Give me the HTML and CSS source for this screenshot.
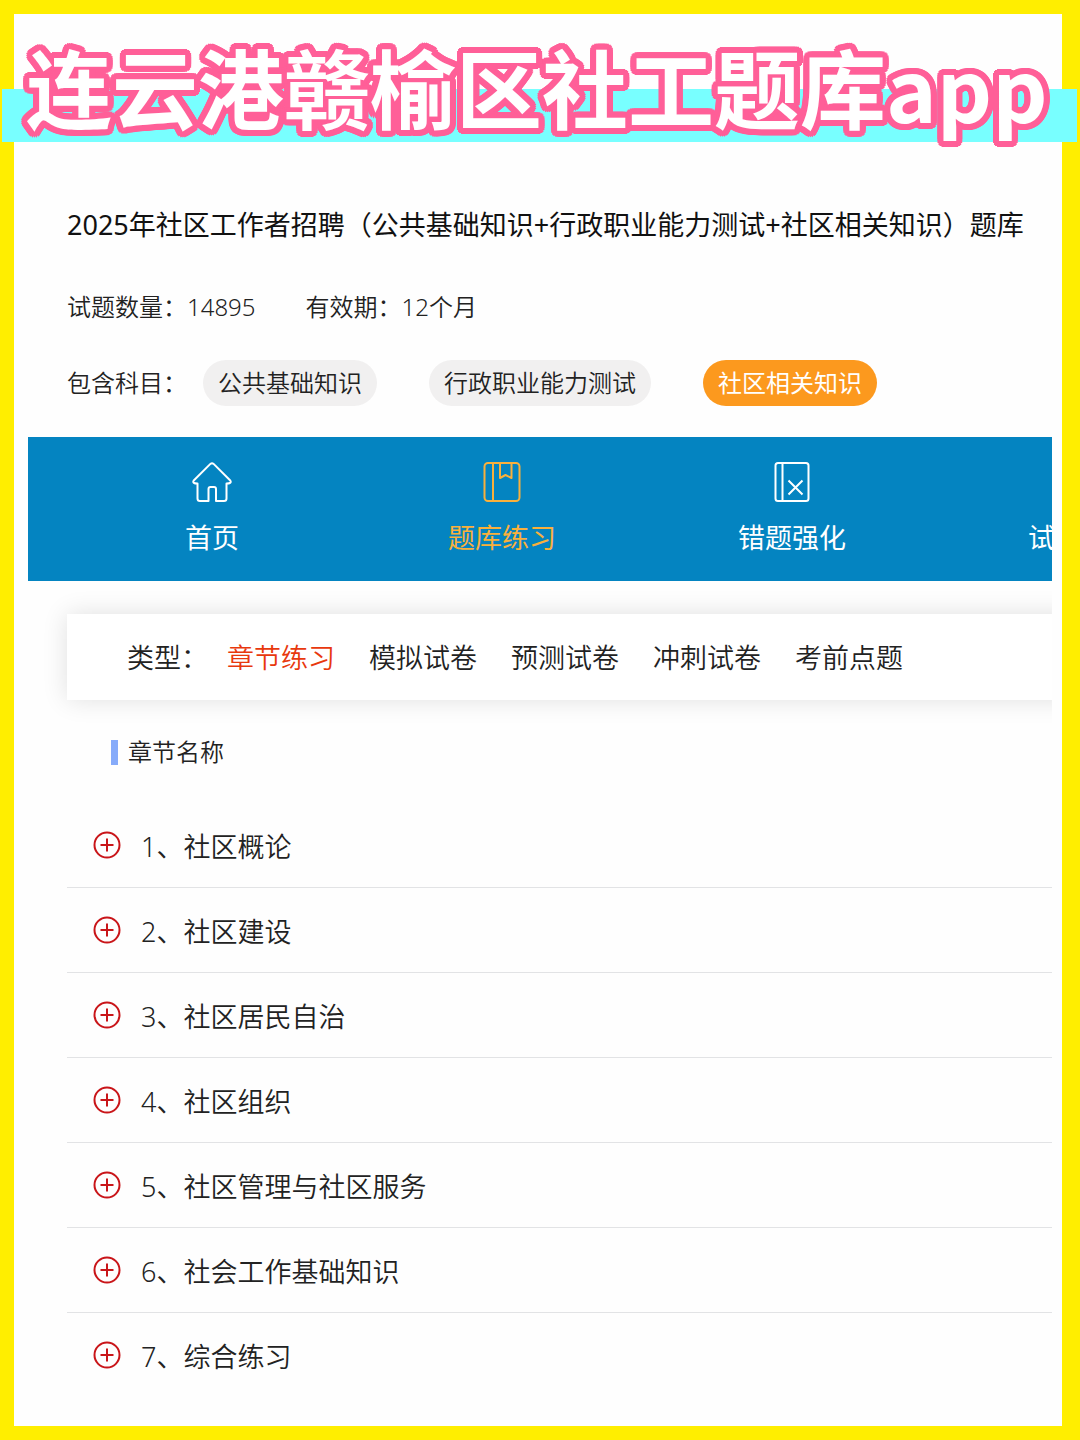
FILE: index.html
```
<!DOCTYPE html>
<html lang="zh-CN">
<head>
    <meta charset="UTF-8">
    <meta name="viewport" content="width=device-width, initial-scale=1.0">
    <title>连云港赣榆区社工题库app</title>
    <link rel="stylesheet" href="styles.css">
</head>
<body>
    <div class="page">
        <header class="banner">
            <h1>连云港赣榆区社工题库app</h1>
        </header>

        <main class="screen">
            <!-- Question bank info -->
            <section class="info">
                <h2>2025年社区工作者招聘（公共基础知识+行政职业能力测试+社区相关知识）题库</h2>
                <p class="meta">
                    <span>试题数量：14895</span>
                    <span>有效期：12个月</span>
                </p>
                <div class="subjects">
                    <span>包含科目：</span>
                    <div class="chips">
                        <button type="button" class="chip">公共基础知识</button>
                        <button type="button" class="chip">行政职业能力测试</button>
                        <button type="button" class="chip active">社区相关知识</button>
                    </div>
                </div>
            </section>

            <!-- Main navigation -->
            <nav class="nav">
                <a href="#" class="nav-item">
                    <svg viewBox="0 0 40 40" aria-hidden="true">
                        <path d="M18.400 1.900Q20 .5 21.600 1.900L38 18.200Q39.500 20 38 21Q37.200 21.400 34.500 21.400V36.500Q34.500 39 32 39H24V27Q24 25 22 25H18.500Q16.500 25 16.500 27V39H8Q5.500 39 5.500 36.500V21.400Q2.800 21.400 2 21Q.5 20 2 18.200Z"/>
                    </svg>
                    <span>首页</span>
                </a>
                <a href="#" class="nav-item active">
                    <svg viewBox="0 0 40 40" aria-hidden="true">
                        <rect x="2.500" y="1" width="35" height="38" rx="3.500"/>
                        <path d="M11 1V39M18 1V16L23.500 13L29.500 16V1"/>
                    </svg>
                    <span>题库练习</span>
                </a>
                <a href="#" class="nav-item">
                    <svg viewBox="0 0 40 40" aria-hidden="true">
                        <rect x="3.500" y="1" width="33" height="38" rx="2.500"/>
                        <path d="M10.500 1V39M16.500 18.500L30.500 32.500M30.500 18.500L16.500 32.500"/>
                    </svg>
                    <span>错题强化</span>
                </a>
                <a href="#" class="nav-item">
                    <svg viewBox="0 0 40 40" aria-hidden="true">
                        <rect x="3.500" y="1" width="33" height="38" rx="2.500"/>
                    </svg>
                    <span class="nav-start">试</span>
                </a>
            </nav>

            <!-- Practice type -->
            <div class="types">
                <span>类型：</span>
                <div class="type-list">
                    <button type="button" class="active">章节练习</button>
                    <button type="button">模拟试卷</button>
                    <button type="button">预测试卷</button>
                    <button type="button">冲刺试卷</button>
                    <button type="button">考前点题</button>
                </div>
            </div>

            <!-- Chapter list -->
            <section class="chapters">
                <h3>章节名称</h3>
                <ul id="chapterList"></ul>
            </section>
        </main>
    </div>

    <script>
        const chapters = [
            '社区概论',
            '社区建设',
            '社区居民自治',
            '社区组织',
            '社区管理与社区服务',
            '社会工作基础知识',
            '综合练习'
        ];

        const chapterList = document.getElementById('chapterList');

        chapters.forEach((name, index) => {
            const item = document.createElement('li');

            item.innerHTML = `
                <button type="button" class="chapter">
                    <svg viewBox="0 0 28 28" aria-hidden="true">
                        <circle cx="14" cy="14" r="12.500"/>
                        <path d="M14 7.500V20.500M7.500 14H20.500"/>
                    </svg>
                    <span>${index + 1}、${name}</span>
                </button>
            `;

            chapterList.appendChild(item);
        });
    </script>
</body>
</html>
```
FILE: styles.css
```
* {
    box-sizing: border-box;
}
body {
    margin: 0;
    padding: 14px 18px 14px 14px;
    min-height: 100vh;
    display: flex;
    background-color: #ffee00;
    color: #222;
    font-family: "Noto Sans", "Noto Sans CJK SC", sans-serif;
    font-size: 27px;
    font-weight: 350;
    line-height: 40px;
}
h1, h2, h3, p, ul {
    margin: 0;
    padding: 0;
}
button {
    padding: 0;
    border: none;
    background: none;
    color: inherit;
    font: inherit;
    cursor: pointer;
}
.page {
    flex: 1;
    min-width: 0;
    background-color: #fefefe;
}

/* Title banner */
.banner {
    position: relative;
    padding: 16px 12px 8px;
}
.banner::before {
    content: "";
    position: absolute;
    left: -12px;
    right: -15px;
    top: 75px;
    height: 53px;
    background-color: #78ffff;
}
.banner h1 {
    position: relative;
    color: #fff;
    font-family: "Noto Sans CJK SC", sans-serif;
    font-size: 86px;
    font-weight: 700;
    line-height: 112px;
    white-space: nowrap;
    /* rounded outline */
    text-shadow:
        6px 0 #ff5f98, -6px 0 #ff5f98, 0 6px #ff5f98, 0 -6px #ff5f98,
        6px 2px #ff5f98, 6px -2px #ff5f98, -6px 2px #ff5f98, -6px -2px #ff5f98,
        2px 6px #ff5f98, 2px -6px #ff5f98, -2px 6px #ff5f98, -2px -6px #ff5f98,
        5px 4px #ff5f98, 5px -4px #ff5f98, -5px 4px #ff5f98, -5px -4px #ff5f98,
        4px 5px #ff5f98, 4px -5px #ff5f98, -4px 5px #ff5f98, -4px -5px #ff5f98,
        3px 0 #ff5f98, -3px 0 #ff5f98, 0 3px #ff5f98, 0 -3px #ff5f98;
}

.screen {
    margin: 0 10px 0 14px;
    overflow: hidden;
}

/* Info */
.info {
    padding: 55px 0 31px 39px;
    white-space: nowrap;
}
.info h2 {
    color: #111;
    font-size: 27px;
    font-weight: 400;
}
.meta {
    display: flex;
    gap: 50px;
    margin-top: 42px;
    font-size: 24px;
}
.subjects {
    display: flex;
    align-items: center;
    gap: 16px;
    margin-top: 33px;
    font-size: 24px;
}
.chips {
    display: flex;
    gap: 52px;
}
.chip {
    height: 46px;
    padding: 0 15px;
    border-radius: 23px;
    background-color: #f1f0f0;
}
.chip.active {
    background-color: #fc991e;
    color: #fff;
    font-weight: 400;
}

/* Navigation */
.nav {
    display: flex;
    height: 144px;
    padding-left: 39px;
    background-color: #0484c1;
    font-weight: 400;
    overflow: hidden;
}
.nav-item {
    flex: 0 0 290px;
    display: flex;
    flex-direction: column;
    align-items: center;
    gap: 16px;
    padding-top: 25px;
    color: #fff;
    text-decoration: none;
}
.nav-item.active {
    color: #f9b03c;
}
.nav-item svg {
    width: 40px;
    height: 40px;
    fill: none;
    stroke: currentColor;
    stroke-width: 2;
    stroke-linejoin: round;
}
.nav-start {
    width: 4em;
}

/* Practice type */
.types {
    display: flex;
    align-items: center;
    gap: 19px;
    height: 86px;
    margin: 33px 0 0 39px;
    padding: 2px 0 0 60px;
    margin-right: -24px;
    background-color: #fff;
    box-shadow: 0 0 24px rgba(0, 0, 0, 0.12);
    white-space: nowrap;
}
.type-list {
    display: flex;
    gap: 34px;
}
.type-list .active {
    color: #e8380d;
}

/* Chapters */
.chapters {
    padding: 32px 0 0 39px;
}
.chapters h3 {
    display: flex;
    align-items: center;
    gap: 10px;
    margin-bottom: 31px;
    padding-left: 44px;
    font-size: 24px;
    font-weight: 350;
}
.chapters h3::before {
    content: "";
    width: 7px;
    height: 25px;
    background-color: #86abfa;
}
.chapters ul {
    list-style: none;
}
.chapters li {
    border-bottom: 1px solid #e2e3e5;
}
.chapters li:last-child {
    border-bottom: none;
}
.chapter {
    display: flex;
    align-items: center;
    gap: 20px;
    width: 100%;
    height: 84px;
    padding-left: 26px;
    text-align: left;
}
.chapter span {
    padding-top: 4px;
}
.chapter svg {
    width: 28px;
    height: 28px;
    fill: none;
    stroke: #c91519;
    stroke-width: 2;
}
```
